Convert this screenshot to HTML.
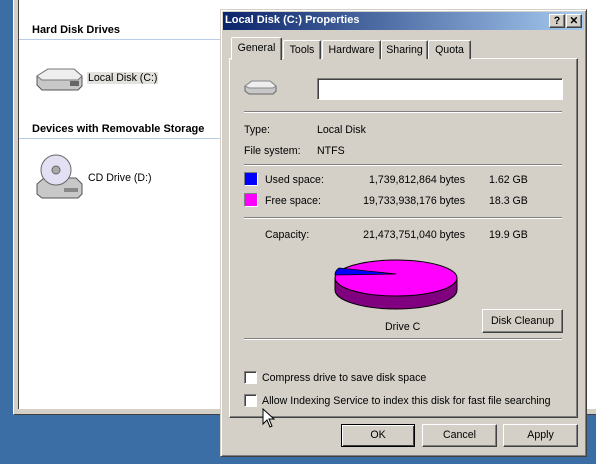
<!DOCTYPE html>
<html><head><meta charset="utf-8"><style>
*{margin:0;padding:0;box-sizing:border-box}
body{width:596px;height:464px;overflow:hidden;background:#3a6ea5;position:relative;font-family:Tahoma,"Liberation Sans",sans-serif;font-size:10.6px;color:#000}
.a{position:absolute}
.t{position:absolute;white-space:nowrap}
.btn{position:absolute;background:#d4d0c8;border:1px solid;border-color:#fff #404040 #404040 #fff;box-shadow:inset -1px -1px 0 #808080;text-align:center;line-height:20px}
.sep{position:absolute;height:2px;border-top:1px solid #808080;border-bottom:1px solid #fff}
.cb{position:absolute;width:13px;height:13px;background:#fff;border:1px solid;border-color:#808080 #fff #fff #808080;box-shadow:inset 1px 1px 0 #404040}
.tab{position:absolute;background:#d4d0c8;border:1px solid;border-color:#fff #404040 transparent #fff;border-bottom:none;box-shadow:inset -1px 0 0 #808080;text-align:center;border-radius:2px 2px 0 0}
</style></head><body>
<div class="a" style="left:13px;top:-2px;width:600px;height:417px;background:#d4d0c8;border-left:1px solid #fff;border-bottom:1px solid #404040"></div>
<div class="a" style="left:18px;top:-2px;width:590px;height:411px;background:#fff;border-left:1px solid #404040"></div>
<div class="t" style="left:32px;top:24px;font-weight:bold;font-size:11px">Hard Disk Drives</div>
<div class="a" style="left:19px;top:39px;width:210px;height:1px;background:#b9cde8"></div>
<div class="t" style="left:32px;top:123px;font-weight:bold;font-size:11px">Devices with Removable Storage</div>
<div class="a" style="left:19px;top:138px;width:210px;height:1px;background:#b9cde8"></div>
<svg class="a" style="left:34px;top:66px" width="50" height="26"><path d="M3 10 L14 3 H40 L48 10 V20 L44 24 H8 L3 19Z" fill="#c8c8c8" stroke="#555"/><path d="M3 10 L14 3 H40 L48 10 L44 14 H8Z" fill="#eee" stroke="#777"/><rect x="36" y="15" width="9" height="5" fill="#666"/></svg>
<div class="t" style="left:87px;top:72px;background:#e4e2de;padding:0 1px">Local Disk (C:)</div>
<svg class="a" style="left:34px;top:150px" width="50" height="50"><path d="M3 34 L10 28 H42 L48 34 V44 L44 48 H8 L3 44Z" fill="#c8c8c8" stroke="#555"/><rect x="30" y="38" width="14" height="4" fill="#888"/><circle cx="22" cy="20" r="15" fill="#e4e0f4" stroke="#666"/><circle cx="22" cy="20" r="4" fill="#aaa" stroke="#666"/></svg>
<div class="t" style="left:88px;top:172px">CD Drive (D:)</div>
<div class="a" style="left:220px;top:9px;width:367px;height:448px;background:#d4d0c8;border:1px solid;border-color:#d4d0c8 #404040 #404040 #d4d0c8;box-shadow:inset 1px 1px 0 #fff,inset -1px -1px 0 #808080"></div>
<div class="a" style="left:223px;top:12px;width:361px;height:18px;background:linear-gradient(90deg,#0a246a,#a6caf0)"></div>
<div class="t" style="left:225px;top:14px;color:#fff;font-weight:bold;font-size:11px">Local Disk (C:) Properties</div>
<div class="btn" style="left:549px;top:14px;width:16px;height:14px;line-height:12px;font-weight:bold">?</div>
<div class="btn" style="left:566px;top:14px;width:16px;height:14px;line-height:12px;font-weight:bold">✕</div>
<div class="a" style="left:229px;top:58px;width:349px;height:360px;border:1px solid;border-color:#fff #404040 #404040 #fff;box-shadow:inset -1px -1px 0 #808080"></div>
<div class="tab" style="left:283px;top:40px;width:38px;height:19px;line-height:19px">Tools</div>
<div class="tab" style="left:322px;top:40px;width:59px;height:19px;line-height:19px">Hardware</div>
<div class="tab" style="left:381px;top:40px;width:47px;height:19px;line-height:19px">Sharing</div>
<div class="tab" style="left:428px;top:40px;width:43px;height:19px;line-height:19px">Quota</div>
<div class="tab" style="left:231px;top:37px;width:51px;height:23px;line-height:21px;border-right-color:#404040">General</div>
<svg class="a" style="left:243px;top:78px" width="36" height="18"><path d="M2 8 L9 3 H27 L33 8 V13 L30 16 H6 L2 13Z" fill="#c8c8c8" stroke="#666"/><path d="M2 8 L9 3 H27 L33 8 L30 10 H6Z" fill="#eee" stroke="#888"/></svg>
<div class="a" style="left:317px;top:78px;width:246px;height:22px;background:#fff;border:1px solid;border-color:#808080 #fff #fff #808080;box-shadow:inset 1px 1px 0 #404040"></div>
<div class="sep" style="left:244px;top:111px;width:318px"></div>
<div class="t" style="left:244px;top:124px">Type:</div><div class="t" style="left:317px;top:124px">Local Disk</div>
<div class="t" style="left:244px;top:145px">File system:</div><div class="t" style="left:317px;top:145px">NTFS</div>
<div class="sep" style="left:244px;top:164px;width:318px"></div>
<div class="a" style="left:244px;top:172px;width:14px;height:14px;background:#00f;border:1px solid;border-color:#808080 #fff #fff #808080"></div>
<div class="t" style="left:265px;top:174px">Used space:</div><div class="t" style="left:465px;top:174px;transform:translateX(-100%)">1,739,812,864 bytes</div><div class="t" style="left:489px;top:174px">1.62 GB</div>
<div class="a" style="left:244px;top:193px;width:14px;height:14px;background:#f0f;border:1px solid;border-color:#808080 #fff #fff #808080"></div>
<div class="t" style="left:265px;top:195px">Free space:</div><div class="t" style="left:465px;top:195px;transform:translateX(-100%)">19,733,938,176 bytes</div><div class="t" style="left:489px;top:195px">18.3 GB</div>
<div class="sep" style="left:244px;top:217px;width:318px"></div>
<div class="t" style="left:265px;top:229px">Capacity:</div><div class="t" style="left:465px;top:229px;transform:translateX(-100%)">21,473,751,040 bytes</div><div class="t" style="left:489px;top:229px">19.9 GB</div>
<svg class="a" style="left:330px;top:258px" width="135" height="56"><path d="M5 20 V32 A61 19 0 0 0 127 32 V20Z" fill="#800080" stroke="#000"/><ellipse cx="66" cy="20" rx="61" ry="18" fill="#f0f" stroke="#000"/><path d="M66 16 L9 10 A61 18 0 0 0 5 17 Z" fill="#00f" stroke="#000" stroke-width=".8"/></svg>
<div class="t" style="left:385px;top:321px">Drive C</div>
<div class="btn" style="left:482px;top:309px;width:81px;height:24px;line-height:22px">Disk Cleanup</div>
<div class="sep" style="left:244px;top:338px;width:318px"></div>
<div class="cb" style="left:244px;top:371px"></div><div class="t" style="left:262px;top:372px">Compress drive to save disk space</div>
<div class="cb" style="left:244px;top:394px"></div><div class="t" style="left:262px;top:395px">Allow Indexing Service to index this disk for fast file searching</div>
<svg class="a" style="left:262px;top:408px" width="16" height="22"><path d="M1 1 V16 L5 12 L8 19 L10 18 L7 11 H12Z" fill="#fff" stroke="#000"/></svg>
<div class="btn" style="left:341px;top:424px;width:74px;height:23px;border-color:#000;box-shadow:inset 1px 1px 0 #fff,inset -1px -1px 0 #404040">OK</div>
<div class="btn" style="left:422px;top:424px;width:75px;height:23px">Cancel</div>
<div class="btn" style="left:503px;top:424px;width:75px;height:23px">Apply</div>
</body></html>
